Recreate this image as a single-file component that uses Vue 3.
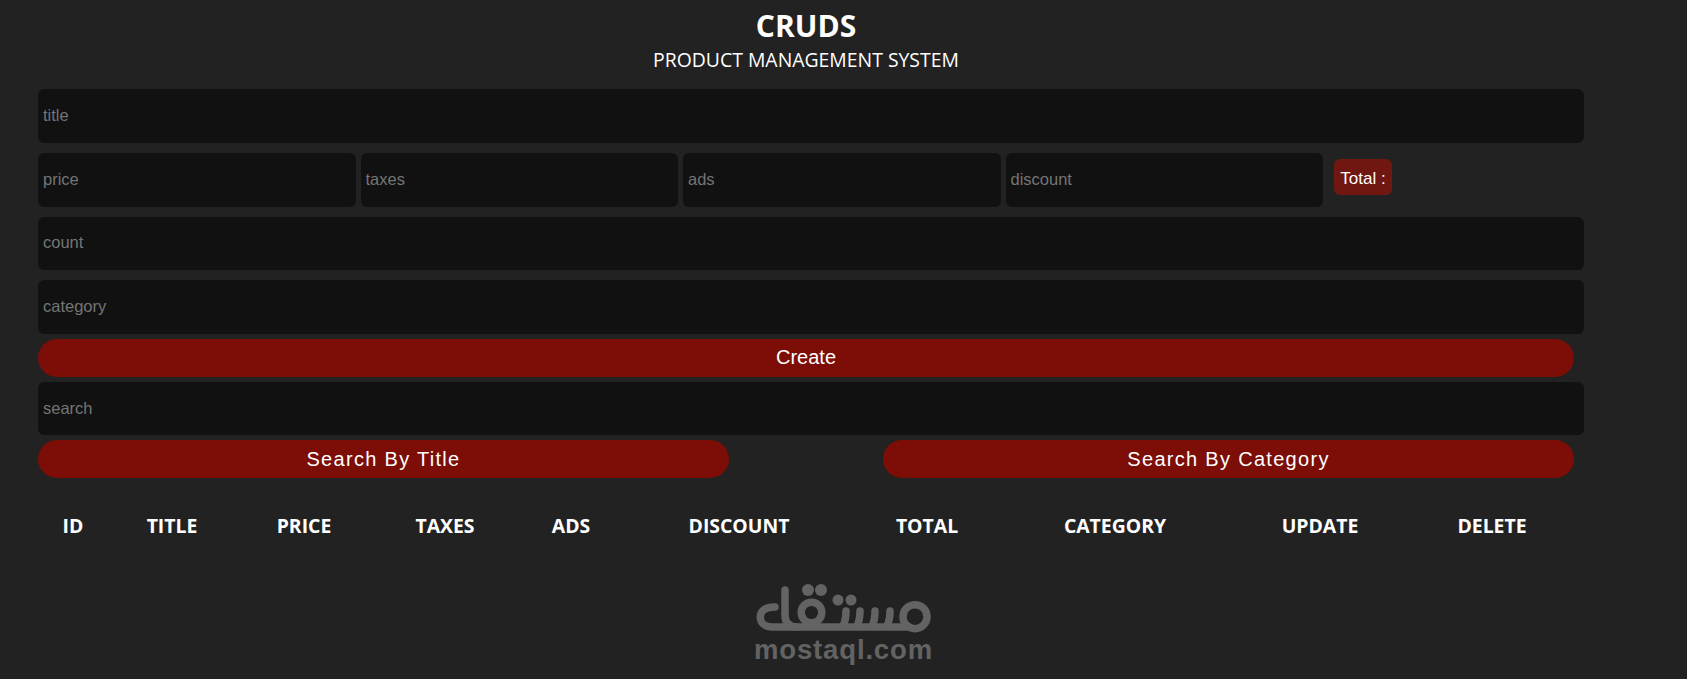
<template>
  <div class="page">
    <header class="head">
      <h2>CRUDS</h2>
      <p>PRODUCT MANAGEMENT SYSTEM</p>
    </header>

    <div class="inputs">
      <input class="field" placeholder="title" />
      <div class="price-row">
        <input v-for="name in priceFields" :key="name" class="field" :placeholder="name" />
        <small class="total">Total :</small>
      </div>
      <input class="field" placeholder="count" />
      <input class="field" placeholder="category" />
      <button class="btn create">Create</button>
      <input class="field search" placeholder="search" />
      <div class="search-btns">
        <button class="btn spaced">Search By Title</button>
        <button class="btn spaced">Search By Category</button>
      </div>
    </div>

    <table class="products">
      <colgroup>
        <col v-for="col in columns" :key="col.label" :style="{ width: col.width + 'px' }" />
      </colgroup>
      <thead>
        <tr>
          <th v-for="col in columns" :key="col.label">{{ col.label }}</th>
        </tr>
      </thead>
    </table>

    <div class="watermark">
      <svg class="mark" width="178" height="52" viewBox="0 0 178 52" fill="none" stroke="#636363" stroke-width="7.5" stroke-linecap="round" stroke-linejoin="round">
        <path d="M31 8V33Q31 45 43 45" />
        <path d="M21 25C11 25 6.3 29 6.3 35C6.3 41 11 45 18 45H155" />
        <circle cx="57.5" cy="30.5" r="10.3" />
        <path d="M89 44Q92 38 92 29M103 44Q106 38 106 29M118 44Q121 38 121 29M133 44Q136 38 136 29" />
        <circle cx="161" cy="34.7" r="12" />
        <g fill="#636363" stroke="none">
          <circle cx="54" cy="8" r="6" />
          <circle cx="67" cy="8" r="6" />
          <circle cx="84" cy="18" r="5.5" />
          <circle cx="97" cy="18" r="5.5" />
        </g>
      </svg>
      <span class="site">mostaql.com</span>
    </div>
  </div>
</template>

<script setup>
const priceFields = ['price', 'taxes', 'ads', 'discount'];

const columns = [
  { label: 'ID', width: 70 },
  { label: 'TITLE', width: 128 },
  { label: 'PRICE', width: 136 },
  { label: 'TAXES', width: 146 },
  { label: 'ADS', width: 106 },
  { label: 'DISCOUNT', width: 230 },
  { label: 'TOTAL', width: 146 },
  { label: 'CATEGORY', width: 230 },
  { label: 'UPDATE', width: 180 },
  { label: 'DELETE', width: 164 }
];
</script>

<style>
body {
  background: #222;
}
</style>

<style scoped>
.page {
  height: 679px;
  padding: 0 104px 0 38px;
  background: #222;
  color: #fff;
  font-family: "Open Sans", "Noto Sans", sans-serif;
  overflow: hidden;
  position: relative;
}
.head {
  text-align: center;
  width: 1536px;
}
.head h2 {
  margin: 0;
  padding-top: 8px;
  font-size: 30px;
  line-height: 36px;
  font-weight: 700;
}
.head p {
  margin: 3px 0 0;
  font-size: 19.4px;
  line-height: 26px;
}
.inputs {
  margin-top: 16.4px;
  display: flex;
  flex-direction: column;
  align-items: flex-start;
}
.field {
  box-sizing: border-box;
  width: 1546px;
  height: 53.6px;
  padding: 0 5px 1px;
  border: none;
  border-radius: 6px;
  outline: none;
  background: #111;
  color: #fff;
  font-family: "Liberation Sans", Arial, sans-serif;
  font-size: 16.5px;
  margin-bottom: 10px;
}
.field::placeholder {
  color: #757575;
}
.price-row {
  display: flex;
  align-items: flex-start;
}
.price-row .field {
  width: 317.5px;
  margin-right: 5px;
}
.total {
  margin: 6px 0 0 6.3px;
  box-sizing: border-box;
  height: 36px;
  padding: 5px 6px 0;
  display: flex;
  align-items: center;
  border-radius: 6px;
  background: #711711;
  font-family: "Liberation Sans", Arial, sans-serif;
  font-size: 17px;
}
.btn {
  width: 1536px;
  height: 38px;
  padding: 0;
  border: none;
  border-radius: 20px;
  background: #7c0e07;
  color: #fff;
  font-family: "Liberation Sans", Arial, sans-serif;
  font-size: 20px;
}
.create {
  margin: -5px 0 5px;
}
.search {
  margin-bottom: 5px;
}
.search-btns {
  width: 1536px;
  display: flex;
  justify-content: space-between;
}
.spaced {
  width: 691px;
  letter-spacing: 1.3px;
}
.products {
  margin-top: 32px;
  width: 1536px;
  table-layout: fixed;
  border-collapse: collapse;
}
.products th {
  padding: 0;
  height: 30px;
  font-size: 19.4px;
  font-weight: 700;
  text-align: center;
}
.watermark {
  position: absolute;
  left: 754px;
  top: 582px;
  width: 178px;
  color: #636363;
}
.mark {
  display: block;
}
.site {
  display: block;
  margin-top: 1px;
  font-family: "Liberation Sans", Arial, sans-serif;
  font-size: 27.5px;
  line-height: 30px;
  font-weight: 700;
  letter-spacing: 0.85px;
  white-space: nowrap;
}
</style>
